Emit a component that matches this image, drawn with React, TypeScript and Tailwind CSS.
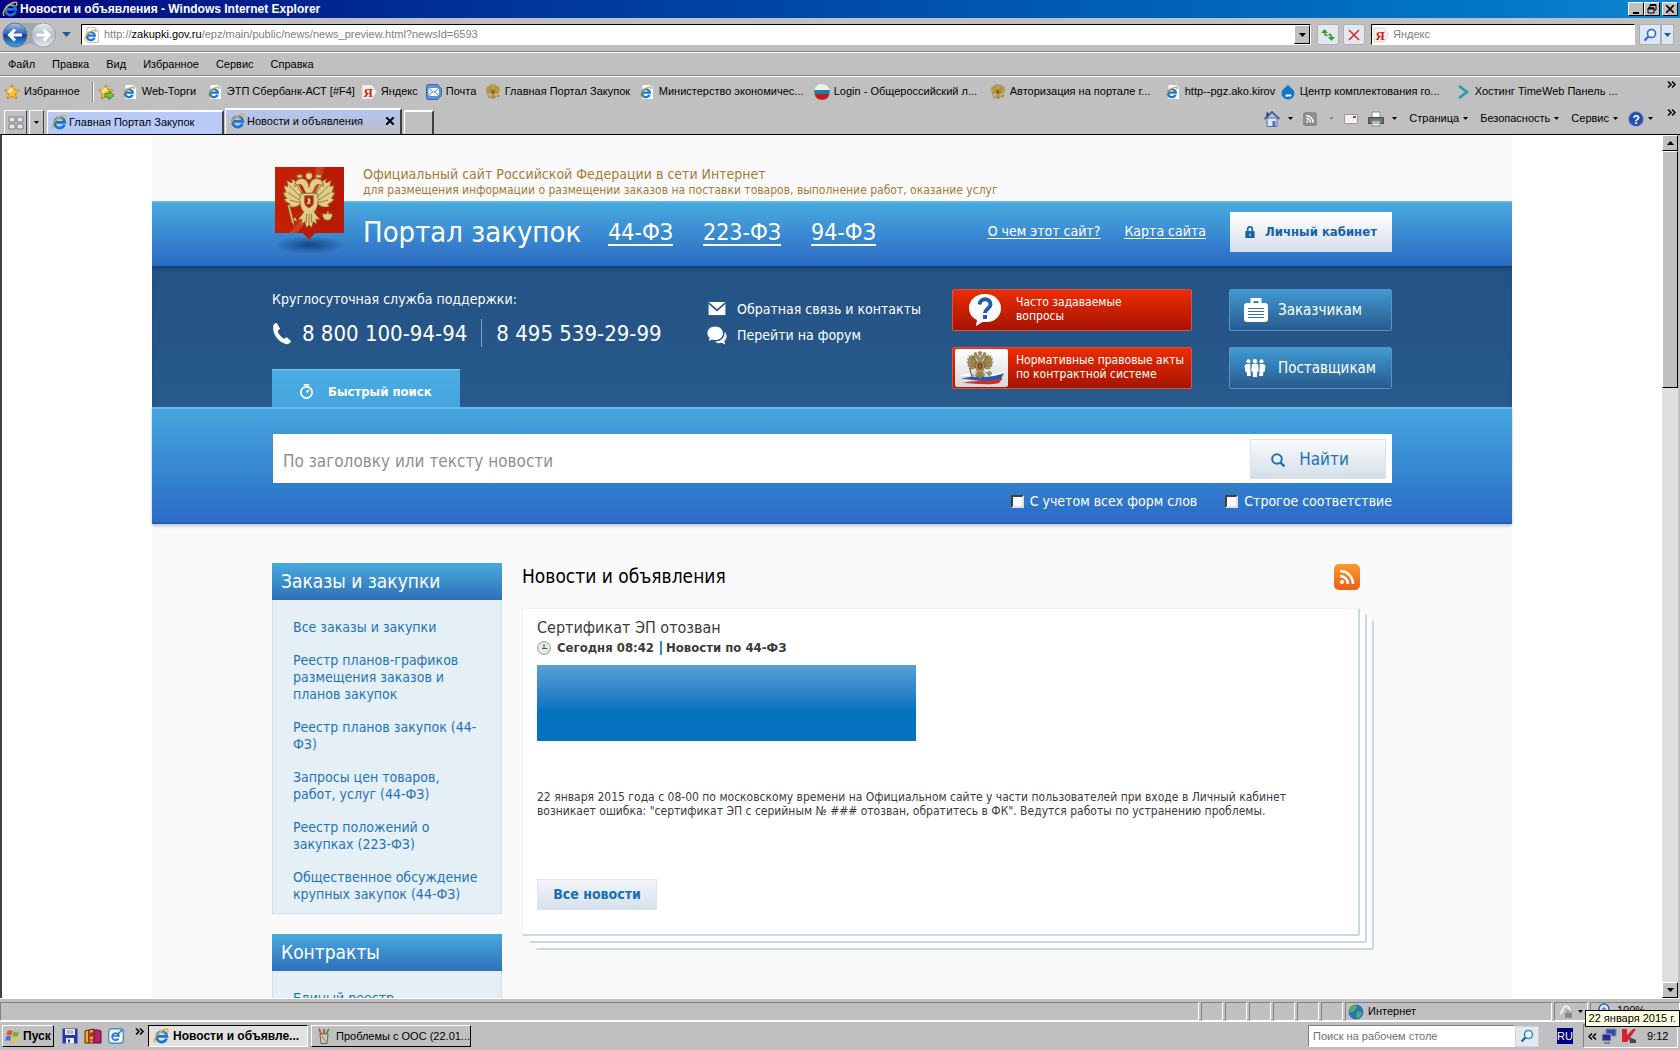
import type { ReactNode } from "react";

const raised = "border border-t-white border-l-white border-b-black border-r-black bg-[#c0c0c0]";
const sunken = "border border-t-[#808080] border-l-[#808080] border-b-white border-r-white";

const IeIcon = ({ className = "size-4" }: { className?: string }) => (
    <svg viewBox="0 0 16 16" className={`shrink-0 ${className}`} aria-hidden="true">
        <path d="M13.6 10.6A5.2 5.2 0 1 1 13.9 8.4H4.6" fill="none" stroke="#1c76d2" strokeWidth="2.7" />
        <path d="M5 6.3A4.2 4.2 0 0 1 12 5.6" fill="none" stroke="#7cc6f5" strokeWidth="1" />
        <path d="M2.4 14.6C-.6 13.4 2.5 7 7.4 3.6C11 1 15 .2 15 2.4C15 3.2 14.6 4.2 14 5" fill="none" stroke="#e9b02c" strokeWidth="1.4" />
    </svg>
);

const IePageIcon = () => (
    <svg viewBox="0 0 16 16" className="size-4 shrink-0" aria-hidden="true">
        <path d="M3 .5h8l3.500 3.500v11.500h-11.500z" fill="#fff" stroke="#b9c3d3" />
        <path d="M11 .5v3.500h3.500" fill="#dfe6f0" stroke="#b9c3d3" />
        <path d="M10.600 10.800A4 4 0 1 1 10.900 8.600H3.600" fill="none" stroke="#1c76d2" strokeWidth="2.200" />
        <path d="M1.600 13.500C-.4 11.500 3 6.500 6.400 4.500C9.400 2.900 12 2.900 11.600 5" fill="none" stroke="#e9b02c" strokeWidth="1.200" />
    </svg>
);

const StarIcon = ({ add = false }: { add?: boolean }) => (
    <svg viewBox="0 0 16 16" className="size-4 shrink-0" aria-hidden="true">
        <path d="M8 .8l2.200 4.800 5.200.6-3.900 3.500 1.100 5.200L8 12.300l-4.600 2.600 1.100-5.200L.6 6.200l5.200-.6z" fill="#fdc02f" stroke="#c97e0c" strokeWidth=".9" />
        <path d="M8 3l1.400 3.300-4.400 3L3 7z" fill="#ffe89a" />
        {add && <path d="M7 9.500h4V7l5 4.300-5 4.300V13H7z" fill="#6cc644" stroke="#2c7a17" strokeWidth=".8" />}
    </svg>
);

const YandexIcon = () => (
    <svg viewBox="0 0 16 16" className="size-4 shrink-0" aria-hidden="true">
        <path d="M1 1h10l4.500 7-4.500 7H1z" fill="#f3f3f3" stroke="#cfcfcf" strokeWidth=".8" />
        <text x="2.500" y="12.500" fontSize="13" fontWeight="700" fill="#e01b1b" fontFamily="Liberation Serif, serif">Я</text>
    </svg>
);

const MailSquareIcon = () => (
    <svg viewBox="0 0 16 16" className="size-4 shrink-0" aria-hidden="true">
        <path d="M2.500.5h9l4 4v7l-4 4h-9a2 2 0 0 1-2-2v-11a2 2 0 0 1 2-2z" fill="#5c93d6" stroke="#2f66ad" />
        <path d="M2.500 4h10.500v8H2.500z" fill="#fff" />
        <path d="M2.500 4l5.200 4.500L13 4M2.500 12l4-4.500M13 12L9 7.500" fill="none" stroke="#3c74bb" strokeWidth=".9" />
    </svg>
);

/* double-headed eagle, shared by the logo, the banner and the bookmarks */
const Eagle = ({ className, main, shade, accent }: { className: string; main: string; shade: string; accent: string }) => (
    <svg viewBox="0 0 60 70" className={`shrink-0 ${className}`} aria-hidden="true">
        <g fill={main} stroke={shade} strokeWidth=".8" strokeLinejoin="round">
            <path d="M24 30C21 20 17 12 9 9c2 3 2 4 1 5L4 11c1 4 2 5 1 7l-4-1c0 4 2 5 2 8l-3 0c1 4 3 5 4 7l-3 1c2 4 5 4 7 6l-2 2c5 2 10 1 13-2l5-3z" />
            <path d="M36 30C39 20 43 12 51 9c-2 3-2 4-1 5l6-3c-1 4-2 5-1 7l4-1c0 4-2 5-2 8l3 0c-1 4-3 5-4 7l3 1c-2 4-5 4-7 6l2 2c-5 2-10 1-13-2l-5-3z" />
            <path d="M27 26c-3-3-3-7-6-10-2-1-5 0-8 2 0-4 2-8 7-9 6-1 9 4 10 10 1-6 4-11 10-10 5 1 7 5 7 9-3-2-6-3-8-2-3 3-3 7-6 10z" />
            <path d="M20 26h20c2 10 0 17-4 22l7 9-5-1 1 6-4-3-2 7-3-3-3 3-2-7-4 3 1-6-5 1 7-9c-4-5-6-12-4-22z" />
            <path d="M26 6l1-4 2 1 1-3 1 3 2-1 1 4-2 4h-4zM16 8l0-4 2 1 1-2 1 2 2-1 0 4zM38 8l0-4 2 1 1-2 1 2 2-1 0 4z" />
            <path d="M46 50h5v-3h2v3h4v2a5 5 0 1 1-11 0zM22 46l-8 8M14 54l-3 3 5 2M38 46l8 6" />
            <path d="M5 40l5 20 3 4-1-6L7 39z" />
        </g>
        <g stroke={shade} strokeWidth=".9" fill="none">
            <path d="M7 17l14 14M5 25l14 9M8 34l12 3M53 17L39 31M55 25l-14 9M52 34l-12 3M14 14l9 14M46 14l-9 14" />
            <path d="M27 50v10M30 50v14M33 50v10" />
        </g>
        <path d="M25 29h10v8c0 3-2 4-5 6-3-2-5-3-5-6z" fill={accent} stroke={shade} />
        <path d="M30 31l2 3-1 2 1 3-2-1-3 1 2-4-1-2z" fill={main} />
    </svg>
);

const BookmarkEagle = () => <Eagle className="h-4 w-4" main="#c9a53c" shade="#5f4714" accent="#8c1f10" />;

const FlagBall = () => (
    <svg viewBox="0 0 16 16" className="size-4 shrink-0" aria-hidden="true">
        <path d="M.6 6A7.600 7.600 0 0 1 15.400 6z" fill="#f2f2f2" />
        <path d="M.6 6h14.800a8 8 0 0 1 0 4H.6a8 8 0 0 1 0-4z" fill="#1b7f9b" />
        <path d="M.6 10h14.800A7.600 7.600 0 0 1 .6 10z" fill="#c8161c" />
    </svg>
);

const DropIcon = () => (
    <svg viewBox="0 0 16 16" className="size-4 shrink-0" aria-hidden="true">
        <path d="M8 .5c1 2.500 6.500 4.500 6.500 9A6.300 6.300 0 0 1 8 15.500 6.300 6.300 0 0 1 1.500 9.500C1.500 5 7 3 8 .5z" fill="#1277c4" />
        <path d="M5 12c1.500-2 2.500-2 3.200-1.200C9.200 10 11 10 11.600 11.600 10.500 13.200 9 12.600 8.200 12 7 13.200 5.500 13 5 12z" fill="#fff" />
    </svg>
);

const ChevronIcon = () => (
    <svg viewBox="0 0 16 16" className="size-4 shrink-0" aria-hidden="true">
        <path d="M4 2l8 6-8 6" fill="none" stroke="#1fa3a8" strokeWidth="2.600" />
    </svg>
);

const Caret = ({ className = "h-1 w-[7px] fill-black" }: { className?: string }) => (
    <svg viewBox="0 0 7 4" className={`shrink-0 ${className}`} aria-hidden="true">
        <path d="M0 0h7L3.500 4z" />
    </svg>
);

const More = ({ className = "" }: { className?: string }) => (
    <svg viewBox="0 0 9 7" className={`h-[7px] w-[9px] shrink-0 ${className}`} aria-hidden="true">
        <path d="M1 .5l3 3-3 3M5 .5l3 3-3 3" fill="none" stroke="#000" strokeWidth="1.500" />
    </svg>
);

const RssGlyph = ({ from, to, className }: { from: string; to: string; className: string }) => (
    <svg viewBox="0 0 26 26" className={`shrink-0 ${className}`} aria-hidden="true">
        <linearGradient id={`rss${from.slice(1)}`} x1="0" y1="0" x2="0" y2="1">
            <stop offset="0" stopColor={from} />
            <stop offset="1" stopColor={to} />
        </linearGradient>
        <rect width="26" height="26" rx="5" fill={`url(#rss${from.slice(1)})`} />
        <circle cx="8" cy="18" r="2" fill="#fff" />
        <path d="M6 12a8 8 0 0 1 8 8M6 7a13 13 0 0 1 13 13" fill="none" stroke="#fff" strokeWidth="2.600" />
    </svg>
);

const TitleBar = () => (
    <header className="flex h-[18px] shrink-0 items-center bg-linear-to-r from-[#000080] to-[#1084d0] pl-0.5 pr-0.5 text-white">
        <IeIcon />
        <h1 className="ml-0.5 grow text-[12px] font-bold">Новости и объявления - Windows Internet Explorer</h1>
        <div className="flex text-black">
            <button aria-label="Свернуть" className={`${raised} flex h-3.5 w-4 items-end pb-px pl-1`}>
                <span className="h-0.5 w-1.5 bg-black" />
            </button>
            <button aria-label="Восстановить" className={`${raised} flex h-3.5 w-4 items-center justify-center`}>
                <svg viewBox="0 0 10 10" className="size-2.5">
                    <path d="M3 4V1h6v5H7M1 4h6v5H1z" fill="none" stroke="#000" />
                    <path d="M3 1h6M1 4.500h6" stroke="#000" strokeWidth="2" />
                </svg>
            </button>
            <button aria-label="Закрыть" className={`${raised} ml-0.5 flex h-3.5 w-4 items-center justify-center`}>
                <svg viewBox="0 0 8 8" className="size-2">
                    <path d="M0 0l8 8M8 0L0 8" stroke="#000" strokeWidth="1.600" />
                </svg>
            </button>
        </div>
    </header>
);

const AddressBar = () => (
    <div className="flex h-[34px] shrink-0 items-center border-b border-[#808080] pl-0.5 pr-1.5">
        <svg viewBox="0 0 56 26" className="h-[26px] w-14 shrink-0" role="img" aria-label="Назад и вперед">
            <defs>
                <linearGradient id="back" x1="0" y1="0" x2="0" y2="1">
                    <stop offset="0" stopColor="#a9c4ea" />
                    <stop offset=".45" stopColor="#2d62b4" />
                    <stop offset=".5" stopColor="#123f93" />
                    <stop offset="1" stopColor="#3fa6ea" />
                </linearGradient>
                <linearGradient id="fwd" x1="0" y1="0" x2="0" y2="1">
                    <stop offset="0" stopColor="#e8edf3" />
                    <stop offset=".5" stopColor="#b4bdc9" />
                    <stop offset="1" stopColor="#e6edf5" />
                </linearGradient>
            </defs>
            <path d="M13 1h29a12 12 0 0 1 0 24c-8 0-8-3-14-3s-7 3-15 3a12 12 0 0 1 0-24z" fill="#a4a8b0" />
            <circle cx="13" cy="13" r="12" fill="url(#back)" stroke="#5d7396" />
            <circle cx="41.500" cy="13" r="12" fill="url(#fwd)" stroke="#9aa3b0" />
            <path d="M20 13H8M13 7.500L7.500 13l5.500 5.500" fill="none" stroke="#fff" strokeWidth="3" />
            <path d="M34.500 13h12M41.500 7.500l5.500 5.500-5.500 5.500" fill="none" stroke="#fff" strokeWidth="3" />
        </svg>
        <Caret className="ml-1 mr-2.5 h-[5px] w-[9px] fill-[#1d5c94]" />
        <div className="flex h-[21px] grow items-center border border-t-black border-l-black border-b-white border-r-white bg-white pl-0.5">
            <IePageIcon />
            <a href="#address" className="ml-1 grow text-[11px] text-[#808080]">
                http://<span className="text-black">zakupki.gov.ru</span>/epz/main/public/news/news_preview.html?newsId=6593
            </a>
            <button aria-label="Показать адреса" className={`${raised} flex h-[19px] w-4 items-center justify-center`}>
                <Caret />
            </button>
        </div>
        <button aria-label="Обновить" className="ml-1.5 flex h-[21px] w-[22px] items-center justify-center rounded-xs border border-[#a9b0bc] bg-[#e4e8ee]">
            <svg viewBox="0 0 16 14" className="h-3.5 w-4">
                <path d="M4.500 1L1 5h7z" fill="#35a02e" />
                <path d="M4.500 4c0 3 1 3.500 3 3.500" fill="none" stroke="#35a02e" strokeWidth="1.800" />
                <path d="M11.500 13l3.500-4H8z" fill="#35a02e" />
                <path d="M11.500 10c0-3-1-3.500-3-3.500" fill="none" stroke="#35a02e" strokeWidth="1.800" />
            </svg>
        </button>
        <button aria-label="Остановить" className="ml-1 flex h-[21px] w-[22px] items-center justify-center rounded-xs border border-[#a9b0bc] bg-[#e4e8ee]">
            <svg viewBox="0 0 12 12" className="size-3">
                <path d="M1 1l10 10M11 1L1 11" stroke="#d0302f" strokeWidth="1.600" />
            </svg>
        </button>
        <div className="ml-1.5 flex h-[21px] w-[264px] items-center border border-t-black border-l-black border-b-white border-r-white bg-white pl-px">
            <YandexIcon />
            <input aria-label="Поиск" placeholder="Яндекс" className="ml-1 min-w-0 grow text-[11px] outline-none placeholder:text-[#808080]" />
        </div>
        <button aria-label="Найти" className="ml-1 flex h-[21px] w-[22px] items-center justify-center border border-[#a9b0bc] bg-[#dde6f4]">
            <svg viewBox="0 0 14 14" className="size-3.5">
                <circle cx="8.500" cy="5.500" r="4" fill="#f2f7ff" stroke="#2c65d0" strokeWidth="1.600" />
                <path d="M5.500 8.500L1.500 12.500" stroke="#2c65d0" strokeWidth="2.200" />
            </svg>
        </button>
        <button aria-label="Параметры поиска" className="flex h-[21px] w-[13px] items-center justify-center border border-[#a9b0bc] bg-[#dde6f4]">
            <Caret className="h-1 w-[7px] fill-[#1d5c94]" />
        </button>
    </div>
);

const MenuBar = () => (
    <nav className="flex h-6 shrink-0 items-center gap-[17px] border-t border-b border-t-white border-b-[#808080] pl-2 text-[11px]">
        {["Файл", "Правка", "Вид", "Избранное", "Сервис", "Справка"].map(item => (
            <button key={item}>{item}</button>
        ))}
    </nav>
);

const bookmarks = [
    { name: "Web-Торги", icon: <IePageIcon />, width: "w-[85px]" },
    { name: "ЭТП Сбербанк-АСТ [#F4]", icon: <IePageIcon />, width: "w-[154px]" },
    { name: "Яндекс", icon: <YandexIcon />, width: "w-[65px]" },
    { name: "Почта", icon: <MailSquareIcon />, width: "w-[59px]" },
    { name: "Главная Портал Закупок", icon: <BookmarkEagle />, width: "w-[154px]" },
    { name: "Министерство экономичес...", icon: <IePageIcon />, width: "w-[175px]" },
    { name: "Login - Общероссийский л...", icon: <FlagBall />, width: "w-[176px]" },
    { name: "Авторизация на портале г...", icon: <BookmarkEagle />, width: "w-[175px]" },
    { name: "http--pgz.ako.kirov", icon: <IePageIcon />, width: "w-[115px]" },
    { name: "Центр комплектования го...", icon: <DropIcon />, width: "w-[175px]" },
    { name: "Хостинг TimeWeb Панель ...", icon: <ChevronIcon />, width: "w-[180px]" }
];

const FavoritesBar = () => (
    <div className="flex h-[31px] shrink-0 items-center border-t border-white pl-1 pr-1 pb-px text-[11px]">
        <button className="flex items-center gap-1">
            <StarIcon />
            Избранное
        </button>
        <span className="ml-3 mr-1 h-5 border-l border-[#808080] border-r border-r-white" />
        <StarIcon add />
        <nav className="ml-2 flex grow">
            {bookmarks.map(mark => (
                <a key={mark.name} href="#bookmark" className={`flex items-center gap-1 whitespace-nowrap ${mark.width}`}>
                    {mark.icon}
                    {mark.name}
                </a>
            ))}
        </nav>
        <button aria-label="Еще закладки" className="self-start pt-1"><More /></button>
    </div>
);

const TabBar = () => (
    <div className="flex h-[27px] shrink-0 items-end pl-1 pr-1 text-[11px]">
        <button aria-label="Быстрые вкладки" className="flex h-6 w-[23px] items-center justify-center border border-t-white border-l-white border-r-[#404040] border-b-0">
            <svg viewBox="0 0 16 14" className="h-3.5 w-4">
                <path d="M1 1h6v5H1zM9 1h6v5H9zM1 8h6v5H1zM9 8h6v5H9z" fill="#e6e6ea" stroke="#7b7b86" />
            </svg>
        </button>
        <button aria-label="Список вкладок" className="ml-0.5 flex h-6 w-[15px] items-center justify-center border border-t-white border-l-white border-r-[#404040] border-b-0">
            <Caret className="h-[3px] w-[5px] fill-black" />
        </button>
        <button className="ml-[3px] flex h-6 w-[177px] items-center border-2 border-b-0 border-l border-t-white border-l-white border-r-[#404040] bg-[#b8cbf8] pb-0.5 pl-[3px]">
            <IeIcon />
            <span className="ml-0.5">Главная Портал Закупок</span>
        </button>
        <div className="ml-px flex h-[26px] w-[177px] items-center border-2 border-b-0 border-l border-t-white border-l-white border-r-[#404040] bg-linear-to-b from-[#b3c4f0] to-[#bcbfc8] pb-0.5 pl-[3px]">
            <IeIcon />
            <span className="ml-0.5 grow">Новости и объявления</span>
            <button aria-label="Закрыть вкладку" className="mr-1.5">
                <svg viewBox="0 0 8 8" className="size-2">
                    <path d="M0 0l8 8M8 0L0 8" stroke="#000" strokeWidth="2" />
                </svg>
            </button>
        </div>
        <button aria-label="Новая вкладка" className="ml-0.5 h-6 w-[30px] border-2 border-b-0 border-l border-t-white border-l-white border-r-[#404040]" />
        <div className="flex grow items-center justify-end self-stretch pb-1">
            <button aria-label="Домой" className="flex items-center gap-2">
                <svg viewBox="0 0 16 16" className="size-4">
                    <path d="M3 7h10v8.500H3z" fill="#dbe6f8" stroke="#5c6ea0" />
                    <path d="M.5 8L8 1l7.500 7" fill="none" stroke="#4a5fa8" strokeWidth="1.800" />
                    <path d="M2.500 1.500h2V5l-2 1.500z" fill="#26339c" />
                    <path d="M8.500 10h3v5.500h-3z" fill="#4a6cc0" />
                </svg>
                <Caret className="h-[3px] w-[5px] fill-black" />
            </button>
            <button aria-label="Каналы" className="ml-2.5 flex items-center gap-3">
                <RssGlyph from="#8f8f8f" to="#8a8a8a" className="size-3.5" />
                <Caret className="h-[3px] w-[5px] fill-[#8c8c8c]" />
            </button>
            <button aria-label="Читать почту" className="ml-2.5">
                <svg viewBox="0 0 14 12" className="h-3 w-3.5">
                    <path d="M.5 1.500h13v9H.5z" fill="#f3f3f3" stroke="#999" />
                    <path d="M9 3h3v2H9z" fill="#d0302f" />
                </svg>
            </button>
            <button aria-label="Печать" className="ml-2.5 flex items-center gap-2">
                <svg viewBox="0 0 16 16" className="size-4">
                    <path d="M4 1h8v6H4z" fill="#fff" stroke="#888" />
                    <path d="M.5 6.500h15v6H.5z" fill="#6f7278" stroke="#44474c" />
                    <path d="M4 10h8v5H4z" fill="#eaf3f8" stroke="#888" />
                    <path d="M5 12h6" stroke="#2f9e8f" />
                </svg>
                <Caret className="h-[3px] w-[5px] fill-black" />
            </button>
            {["Страница", "Безопасность", "Сервис"].map(item => (
                <button key={item} className="ml-3 flex items-center gap-1">
                    {item}
                    <Caret className="h-[3px] w-[5px] fill-black" />
                </button>
            ))}
            <button aria-label="Справка" className="ml-2.5 flex items-center gap-1">
                <svg viewBox="0 0 16 16" className="size-4">
                    <circle cx="8" cy="8" r="7.500" fill="#2a4fa8" stroke="#8ba3d8" />
                    <text x="4.500" y="12.500" fontSize="12" fontWeight="700" fill="#fff">?</text>
                </svg>
                <Caret className="h-[3px] w-[5px] fill-black" />
            </button>
        </div>
        <button aria-label="Еще команды" className="ml-3.5 self-start pt-0.5"><More /></button>
    </div>
);

const SiteHeader = () => (
    <div className="mx-auto flex w-full max-w-[1120px] gap-[19px]">
        <div className="relative w-[72px] shrink-0">
            <svg viewBox="0 0 84 90" className="absolute top-[32px] left-0 h-[90px] w-[84px]" role="img" aria-label="Герб России">
                <defs>
                    <radialGradient id="logoShadow">
                        <stop offset="0" stopColor="#12407c" stopOpacity=".9" />
                        <stop offset="1" stopColor="#12407c" stopOpacity="0" />
                    </radialGradient>
                </defs>
                <ellipse cx="38" cy="78" rx="36" ry="9" fill="url(#logoShadow)" />
                <path d="M3 0h69v66H43l-6 6-6-6H3z" fill="#c41f05" />
                <path d="M49 0h23v66H43l-6 6-6-6h-8C40 52 46 24 49 0z" fill="#b81a04" />
                <path d="M44 0h8C48 26 40 50 25 66h-8C34 50 41 26 44 0z" fill="#d4503c" opacity=".6" />
            </svg>
            <Eagle className="absolute top-[36px] left-[9px] h-[60px] w-[56px]" main="#e3cc8a" shade="#86622a" accent="#b3200a" />
        </div>
        <div className="grow">
            <div className="flex h-[66px] flex-col justify-end pb-[3px] text-[#a37b35]">
                <p className="text-[14px] leading-4">Официальный сайт Российской Федерации в сети Интернет</p>
                <p className="text-[12px] leading-4">для размещения информации о размещении заказов на поставки товаров, выполнение работ, оказание услуг</p>
            </div>
            <div className="flex h-[65px] items-center pb-1 text-white">
                <h2 className="text-[29px] leading-9">Портал закупок</h2>
                <nav className="ml-[27px] flex grow gap-[30px] text-[23px] leading-8 underline decoration-2 underline-offset-4">
                    <a href="#44">44-ФЗ</a>
                    <a href="#223">223-ФЗ</a>
                    <a href="#94">94-ФЗ</a>
                </nav>
                <nav className="flex gap-6 text-[14px] underline underline-offset-2">
                    <a href="#about">О чем этот сайт?</a>
                    <a href="#map">Карта сайта</a>
                </nav>
                <button className="ml-6 flex h-10 w-[162px] items-center justify-center gap-2.5 bg-linear-to-b from-white to-[#d5deea] text-[13px] font-bold text-[#1562a8]">
                    <svg viewBox="0 0 10 13" className="h-3 w-2.5">
                        <path d="M2.500 6V3.500a2.500 2.500 0 0 1 5 0V6" fill="none" stroke="#1562a8" strokeWidth="1.800" />
                        <path d="M0 5.500h10V13H0z" fill="#1562a8" />
                        <path d="M4.500 8h1v3h-1z" fill="#fff" />
                    </svg>
                    Личный кабинет
                </button>
            </div>
        </div>
    </div>
);

const RedButton = ({ icon, children }: { icon: ReactNode; children: ReactNode }) => (
    <button className="flex h-[42px] w-[240px] items-center rounded-xs border border-[#d8553f] bg-linear-to-b from-[#ec2d02] to-[#a81303] pb-0.5 text-left text-[12px] leading-3.5 text-white">
        <span className="flex w-[63px] justify-center pt-0.5">{icon}</span>
        <span className="whitespace-nowrap">{children}</span>
    </button>
);

const BlueButton = ({ icon, children }: { icon: ReactNode; children: ReactNode }) => (
    <button className="flex h-[42px] w-[163px] items-center rounded-xs border border-[#5a91c8] bg-linear-to-b from-[#419bd3] to-[#285a8e] pl-3.5 text-[15px] text-white">
        <span className="flex w-[34px]">{icon}</span>
        {children}
    </button>
);

const SupportPanel = () => (
    <div className="bg-linear-to-b from-[#245285] to-[#285a8c] text-white shadow-[inset_0_4px_4px_-2px_#123f6e]">
        <div className="mx-auto flex w-full max-w-[1120px] justify-between">
            <div className="flex w-[400px] flex-col">
                <p className="mt-[23px] text-[14px] leading-5">Круглосуточная служба поддержки:</p>
                <div className="mt-2.5 flex h-7 items-center text-[22px]">
                    <svg viewBox="0 0 20 24" className="mr-2.5 h-[23px] w-5">
                        <path d="M1 4C1 2 3 1 4.500 1L8 7 5.500 9.500c.8 3 3 6 6.500 8L15 16l4.500 4c-1 2-3 3.500-5.500 3C6 21-.5 12 1 4z" fill="#fff" />
                    </svg>
                    8 800 100-94-94
                    <span className="mx-3.5 h-7 border-l border-[#7aa3cc]" />
                    8 495 539-29-99
                </div>
                <div className="mt-[22px] flex h-[38px] w-[188px] items-center border-t border-[#7cc4ee] bg-linear-to-b from-[#4aace2] to-[#45a5de] pl-[27px] pt-1.5 text-[13px] font-bold">
                    <svg viewBox="0 0 16 16" className="mr-3.5 size-[15px]">
                        <circle cx="8" cy="9" r="6" fill="none" stroke="#fff" strokeWidth="1.800" />
                        <path d="M5 1h6M8 9l2.500-2.500" stroke="#fff" strokeWidth="1.800" />
                    </svg>
                    Быстрый поиск
                </div>
            </div>
            <nav className="ml-auto mt-8 mr-8 flex w-[213px] flex-col gap-1 text-[14px] leading-[22px] whitespace-nowrap">
                <a href="#feedback" className="flex items-center gap-2.5">
                    <svg viewBox="0 0 20 15" className="h-3.5 w-5 shrink-0">
                        <path d="M1 0h18v14H1z" fill="#fff" />
                        <path d="M1 1l9 8 9-8" fill="none" stroke="#25568a" strokeWidth="1.800" />
                    </svg>
                    Обратная связь и контакты
                </a>
                <a href="#forum" className="flex items-center gap-2.5">
                    <svg viewBox="0 0 22 20" className="h-[19px] w-5 shrink-0">
                        <path d="M9 0c5 0 8.500 3 8.500 7.500S14 15 9 15c-1.500 0-2.500-.2-3.500-.6L2 16l1-3.500C1.500 11.500.5 9.700.5 7.500.5 3 4 0 9 0z" fill="#fff" />
                        <path d="M19.500 6c4 5 1 9-.5 10l1 4-4-2c-3 1-6 0-7-1.500 7 0 10.500-4 10.500-10.500z" fill="#fff" />
                    </svg>
                    Перейти на форум
                </a>
            </nav>
            <div className="mt-[23px] flex flex-col gap-4">
                <RedButton
                    icon={
                        <svg viewBox="0 0 34 34" className="size-[34px]">
                            <path d="M17 1c9 0 16 6 16 14s-6 14-14 14c-1 0-3 0-4-.3L8 33l1-6C4 25 1 20 1 15 1 7 8 1 17 1z" fill="#fff" />
                            <path d="M11.500 11.500c.5-7 11-7 11 0 0 4-5.500 4.500-5.500 8.500M17 22v4" fill="none" stroke="#1d5cae" strokeWidth="4" />
                        </svg>
                    }
                >
                    Часто задаваемые<br />вопросы
                </RedButton>
                <RedButton
                    icon={
                        <span className="mr-1.5 flex h-[38px] w-[53px] items-center justify-center rounded-xs bg-linear-to-b from-white to-[#d8d8d8]">
                            <svg viewBox="0 0 53 38" className="h-[38px] w-[53px]">
                                <path d="M4 27c14-6 26 1 46-5l-3 4c-16 5-28 0-43 1z" fill="#fff" />
                                <path d="M6 30c14-5 26 1 43-6l-3 6c-16 5-28 0-40 0z" fill="#2a56b4" />
                                <path d="M8 34c14-4 26 0 40-5l-4 5c-14 3-24 0-36 0z" fill="#d92b20" />
                                <svg x="10" y="2" width="30" height="30">
                                    <Eagle className="h-[30px] w-[30px]" main="#a89258" shade="#42381f" accent="#c02418" />
                                </svg>
                            </svg>
                        </span>
                    }
                >
                    Нормативные правовые акты<br />по контрактной системе
                </RedButton>
            </div>
            <div className="mt-[23px] ml-[37px] flex flex-col gap-4">
                <BlueButton
                    icon={
                        <svg viewBox="0 0 24 24" className="size-6">
                            <path d="M8 5V1.500h8V5" fill="none" stroke="#fff" strokeWidth="3" />
                            <rect y="5" width="24" height="19" rx="3" fill="#fff" />
                            <path d="M4 10.500h16M4 13.500h16M4 16.500h16M4 19.500h16" stroke="#2f6fae" />
                        </svg>
                    }
                >
                    Заказчикам
                </BlueButton>
                <BlueButton
                    icon={
                        <svg viewBox="0 0 22 18" className="h-[18px] w-[22px]" fill="#fff">
                            <circle cx="4.500" cy="2.200" r="2" />
                            <circle cx="11" cy="2.200" r="2.200" />
                            <circle cx="17.500" cy="2.200" r="2" />
                            <path d="M2 5h4.300L6.500 13l.5 4H3l-.3-4H1.500L.5 7zM20 5h-4.300l-.2 8-.5 4h4l.3-4h1.200l1-6zM8 5h6l.8 7.500h-1.500L13 18H9l-.3-5.500H7.200z" />
                        </svg>
                    }
                >
                    Поставщикам
                </BlueButton>
            </div>
        </div>
    </div>
);

const Checkbox = ({ id, label }: { id: string; label: string }) => (
    <label htmlFor={id} className="flex items-center gap-1.5 text-[14px] leading-5">
        <input id={id} type="checkbox" className="size-[13px] appearance-none border-2 border-t-[#404040] border-l-[#404040] border-b-[#e0e0e0] border-r-[#e0e0e0] bg-white" />
        {label}
    </label>
);

const SearchPanel = () => (
    <form className="border-t-2 border-b-2 border-t-[#6db8e8] border-b-[#1c62b8] bg-linear-to-b from-[#45a5de] to-[#2c6cc5] pt-[25px] pb-[11px] shadow-[0_2px_3px_#c3c3c8]">
        <div className="mx-auto w-full max-w-[1120px]">
            <div className="ml-px flex h-[49px] items-center bg-white pr-1.5">
                <input aria-label="Поиск по новостям" placeholder="По заголовку или тексту новости" className="h-full grow pt-1 pl-2.5 text-[17px] text-[#333] outline-none placeholder:text-[#909090]" />
                <button type="button" className="flex h-10 w-[136px] items-center justify-center gap-3.5 border border-[#d9e2ea] bg-linear-to-b from-[#fafafb] to-[#d4dfe9] pt-0.5 pr-4 text-[17px] text-[#1a72b8]">
                    <svg viewBox="0 0 14 14" className="size-3.5">
                        <circle cx="6" cy="6" r="4.800" fill="none" stroke="#1a72b8" strokeWidth="2" />
                        <path d="M9.500 9.500L13.500 13.500" stroke="#1a72b8" strokeWidth="2.400" />
                    </svg>
                    Найти
                </button>
            </div>
            <div className="mt-2 flex justify-end gap-7 text-white">
                <Checkbox id="forms" label="С учетом всех форм слов" />
                <Checkbox id="strict" label="Строгое соответствие" />
            </div>
        </div>
    </form>
);

const sections = [
    {
        title: "Заказы и закупки",
        links: [
            "Все заказы и закупки",
            "Реестр планов-графиков размещения заказов и планов закупок",
            "Реестр планов закупок (44-ФЗ)",
            "Запросы цен товаров, работ, услуг (44-ФЗ)",
            "Реестр положений о закупках (223-ФЗ)",
            "Общественное обсуждение крупных закупок (44-ФЗ)"
        ]
    },
    {
        title: "Контракты",
        links: ["Единый реестр"]
    }
];

const Sidebar = () => (
    <aside className="flex w-[230px] shrink-0 flex-col gap-5">
        {sections.map(section => (
            <section key={section.title}>
                <h2 className="h-[37px] bg-linear-to-b from-[#48aadb] to-[#2e70ba] pl-[9px] text-[19px] leading-[37px] text-white">{section.title}</h2>
                <ul className="flex flex-col gap-4 border border-t-0 border-[#cfe0ec] bg-[#e4eff6] pt-[19px] pr-4 pb-2.5 pl-5 text-[14px] leading-[17px] text-[#1f74b8]">
                    {section.links.map(link => (
                        <li key={link}><a href="#section">{link}</a></li>
                    ))}
                </ul>
            </section>
        ))}
    </aside>
);

const News = () => (
    <main className="grow">
        <div className="mr-8 flex h-[27px] items-center justify-between">
            <h2 className="text-[19px] text-black">Новости и объявления</h2>
            <a href="#rss" aria-label="RSS"><RssGlyph from="#fb9a2a" to="#ee5f12" className="size-[26px]" /></a>
        </div>
        <div className="relative mt-[18px] mr-8">
            <div className="absolute top-3 -right-3.5 -bottom-3.5 left-3.5 rounded-xs border-r-2 border-b-2 border-[#c6dae1] bg-white" />
            <div className="absolute top-1.5 -right-[7px] -bottom-[7px] left-[7px] rounded-xs border-r-2 border-b-2 border-[#c6dae1] bg-white" />
            <article className="relative rounded-xs border border-r-2 border-b-2 border-t-[#f1f1f3] border-l-[#f1f1f3] border-b-[#c6dae1] border-r-[#c6dae1] bg-white pt-[7px] pr-12 pb-6 pl-[14px] text-[#3c3c3c]">
                <h3 className="text-[16px] leading-6">Сертификат ЭП отозван</h3>
                <p className="flex h-4 items-center text-[13px] font-bold">
                    <svg viewBox="0 0 14 14" className="mr-1.5 size-3.5">
                        <circle cx="7" cy="7" r="6.400" fill="#e4ebe4" stroke="#8f9a92" />
                        <path d="M7 3v4.500h3.500M5 7.500h2" fill="none" stroke="#555" />
                    </svg>
                    Сегодня 08:42
                    <span className="ml-1.5 mr-1 h-3.5 w-0.5 bg-[#4488cc]" />
                    Новости по 44-ФЗ
                </p>
                <div className="mt-[9px] h-[76px] w-[379px] bg-linear-to-b from-[#569fd4] via-[#0472bf] via-60% to-[#0472bf]" />
                <p className="mt-[49px] text-[12px] leading-3.5">
                    22 января 2015 года с 08-00 по московскому времени на Официальном сайте у части пользователей при входе в Личный кабинет<br />
                    возникает ошибка: "сертификат ЭП с серийным № ### отозван, обратитесь в ФК". Ведутся работы по устранению проблемы.
                </p>
                <button className="mt-[61px] flex h-[31px] w-[120px] items-center justify-center border border-[#dfe3ea] bg-linear-to-b from-[#f3f5f9] to-[#d6e0ec] text-[14px] font-bold text-[#1670b8]">Все новости</button>
            </article>
        </div>
    </main>
);

const Viewport = () => (
    <div className="flex min-h-0 grow border-t border-l-2 border-t-black border-l-[#404040] bg-white">
        <div className="grow overflow-hidden font-['DejaVu_Sans_Condensed','DejaVu_Sans',sans-serif]">
            <div className="mx-auto max-w-[1360px] bg-[#fafafa]">
                <div className="bg-[linear-gradient(to_bottom,#fafafa_66px,#7cc0ea_66px,#48aade_68px,#2c6cc5_129px,#1c6cc4_131px)]">
                    <SiteHeader />
                </div>
                <SupportPanel />
                <SearchPanel />
                <div className="mx-auto flex w-full max-w-[1120px] gap-5 pt-[39px]">
                    <Sidebar />
                    <News />
                </div>
            </div>
        </div>
        <div className="flex w-4 shrink-0 flex-col bg-[#dfdfdf]" aria-hidden="true">
            <span className={`${raised} flex h-4 items-center justify-center`}><Caret className="h-1 w-[7px] rotate-180 fill-black" /></span>
            <span className={`${raised} h-[237px]`} />
            <span className="grow" />
            <span className={`${raised} flex h-4 items-center justify-center`}><Caret /></span>
        </div>
        <span className="w-0.5 shrink-0 bg-[#c0c0c0]" />
    </div>
);

const StatusBar = () => (
    <footer className="flex h-[23px] shrink-0 gap-0.5 border-t border-white pt-[3px] text-[11px]">
        <span className={`${sunken} grow`} />
        {[1, 2, 3, 4, 5, 6].map(cell => (
            <span key={cell} className={`${sunken} w-[22px]`} />
        ))}
        <span className={`${sunken} flex w-[207px] items-center gap-1 pl-0.5`}>
            <svg viewBox="0 0 16 16" className="size-4">
                <circle cx="8" cy="8" r="7.500" fill="#2673c8" />
                <path d="M3 3c2-2 5-2 6-1 0 2-2 2-2 4s-2 2-4 2l-2 1C1 6 2 4 3 3zM9 8c3-1 5 0 5 1s-2 4-4 5c-2-1-2-4-1-6z" fill="#55b04c" />
            </svg>
            Интернет
        </span>
        <span className={`${sunken} flex w-[34px] items-center justify-between px-1`}>
            <svg viewBox="0 0 14 14" className="size-3.5">
                <path d="M1 9C4 7 4 1 7 1s4 4 4 6" fill="none" stroke="#f0f0f0" strokeWidth="2" />
                <path d="M6 8h7v5H6z" fill="#888" />
                <path d="M8 8V6h3v2" fill="none" stroke="#888" />
            </svg>
            <Caret className="h-[3px] w-[5px] fill-black" />
        </span>
        <span className={`${sunken} flex w-[90px] items-start gap-1.5 pl-1.5 leading-3.5`}>
            <svg viewBox="0 0 14 14" className="size-3.5">
                <circle cx="7" cy="6" r="5" fill="#e6f0fb" stroke="#2c65a8" strokeWidth="1.500" />
                <path d="M7 3.500v5M4.500 6h5" stroke="#2c65a8" />
            </svg>
            100%
        </span>
    </footer>
);

const TaskBar = () => (
    <footer className="relative flex h-[29px] shrink-0 items-center border-t border-white pl-0.5 pr-0.5 text-[11px] whitespace-nowrap">
        <button className={`${raised} flex h-[22px] w-[52px] items-center gap-0.5 pl-0.5 text-[12px] font-bold`}>
            <svg viewBox="0 0 16 16" className="size-4">
                <path d="M2.500 3c2-1.200 3.500-1 5 0l-1 4.500c-1.500-1-3-1-5 0z" fill="#e8502c" />
                <path d="M8.500 3.500c2 1 3.500 1 5.500 0L13 8c-2 1-3.500 1-5.500 0z" fill="#6fb52c" />
                <path d="M1.200 8.500c2-1.200 3.500-1 5 0L5.200 13c-1.500-1-3-1-5 0z" fill="#3a74d8" />
                <path d="M7.200 9c2 1 3.500 1 5.500 0l-1 4.500c-2 1-3.500 1-5.500 0z" fill="#f5c02c" />
            </svg>
            Пуск
        </button>
        <div className="ml-2 flex items-center gap-1.5">
            <svg viewBox="0 0 16 16" className="size-4">
                <path d="M.5.500h15v15h-15z" fill="#2338b8" />
                <path d="M3 1h10v6H3zM4 10h8v5.500H4z" fill="#f0f0f8" />
                <path d="M4.500 3h7M4.500 5h7" stroke="#888" />
                <path d="M6 11.500h2v3H6z" fill="#2338b8" />
            </svg>
            <svg viewBox="0 0 18 16" className="h-4 w-[18px]">
                <path d="M1 3l4-1v13H1z" fill="#e8b420" stroke="#6b1220" />
                <path d="M5 2l5-1v14H5z" fill="#e8b420" stroke="#6b1220" />
                <path d="M6 5l3-1v4l-3 1z" fill="#b8242c" />
                <path d="M10 2h4l3 1v12h-7z" fill="#c02050" stroke="#50104c" />
                <path d="M6 12h3M11 5h5M11 12h5" stroke="#a02894" strokeWidth="1.500" />
            </svg>
            <svg viewBox="0 0 16 16" className="size-4">
                <rect x=".7" y=".7" width="14.600" height="14.600" rx="3" fill="#f2f8fd" stroke="#4a8cc8" strokeWidth="1.400" />
                <path d="M10.500 10.500A3.500 3.500 0 1 1 11 8H5M9 7l5-5" fill="none" stroke="#2673c8" strokeWidth="1.600" />
            </svg>
        </div>
        <button aria-label="Еще значки" className="ml-[11px] mr-1 self-start pt-1.5"><More /></button>
        <button className="flex h-[22px] w-[160px] items-center gap-1 border border-t-black border-l-black border-b-white border-r-white bg-[#e2e2e2] pl-1 text-[12px] font-bold">
            <IeIcon />
            Новости и объявле...
        </button>
        <button className={`${raised} ml-[3px] flex h-[22px] w-[160px] items-center gap-1 pl-1`}>
            <svg viewBox="0 0 16 16" className="size-4 shrink-0">
                <path d="M4 6h8l-1 9.500H5z" fill="#c8ccd4" stroke="#666" />
                <path d="M5 6L3 .5M8 6V1" stroke="#d04428" strokeWidth="1.800" />
                <path d="M10 6l3-5" stroke="#3c9c40" strokeWidth="1.800" />
                <path d="M6 8l4 6" stroke="#e0982c" strokeWidth="1.500" />
            </svg>
            Проблемы с ООС (22.01...
        </button>
        <span className="grow" />
        <input aria-label="Поиск на рабочем столе" placeholder="Поиск на рабочем столе" className={`${sunken} h-[22px] w-[207px] bg-white pl-1 placeholder:text-[#707070]`} />
        <button aria-label="Искать" className="flex h-[21px] w-6 items-center justify-center border border-[#cfd4dc] bg-[#e4e9f0]">
            <svg viewBox="0 0 14 14" className="size-3.5">
                <circle cx="8.500" cy="5.500" r="4" fill="#f2f7ff" stroke="#3c8cc8" strokeWidth="1.600" />
                <path d="M5.500 8.500L1.500 12.500" stroke="#1f5fa8" strokeWidth="2.200" />
            </svg>
        </button>
        <span className="ml-[18px] flex h-4 w-4 items-center justify-center bg-[#000080] text-white">RU</span>
        <div className={`${sunken} ml-2.5 flex h-6 w-[95px] items-center gap-1 pl-1`}>
            <More className="rotate-180" />
            <svg viewBox="0 0 16 16" className="size-4">
                <path d="M5 1h10v7H5z" fill="#3448a8" stroke="#888fb0" />
                <path d="M1 6h9v7H1z" fill="#26308c" stroke="#a8b0d0" />
                <path d="M3 15h6" stroke="#707890" strokeWidth="1.600" />
            </svg>
            <svg viewBox="0 0 16 16" className="size-4">
                <path d="M1 1h5v6l6-6h3L6 14H1z" fill="#d8202c" />
                <path d="M8 9l7 3v3H9z" fill="#404850" />
            </svg>
            <time className="ml-1.5">9:12</time>
        </div>
        <span role="tooltip" className="absolute -top-3 right-0 border border-black bg-[#ffffe1] px-[3px] leading-[15px]">22 января 2015 г.</span>
    </footer>
);

const App = () => {
    return (
        <div className="flex h-screen flex-col overflow-hidden bg-[#c0c0c0] font-['Liberation_Sans',Arial,sans-serif] text-black">
            <TitleBar />
            <AddressBar />
            <MenuBar />
            <FavoritesBar />
            <TabBar />
            <Viewport />
            <StatusBar />
            <TaskBar />
        </div>
    );
};

export default App;
